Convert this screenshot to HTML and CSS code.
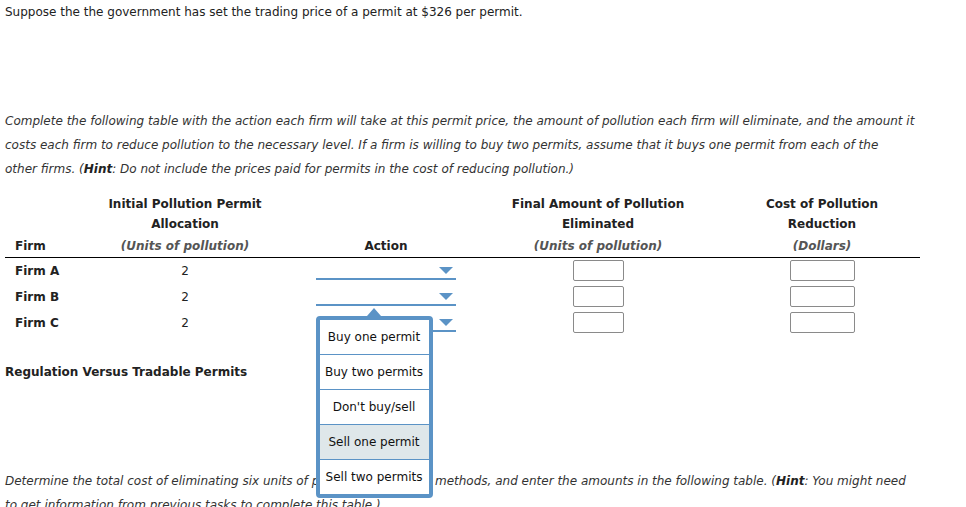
FILE: index.html
```html
<!DOCTYPE html>
<html>
<head>
<meta charset="utf-8">
<link rel="stylesheet" href="styles.css">
</head>
<body>
<div class="page">
  <p class="intro">Suppose the the government has set the trading price of a permit at $326 per permit.</p>

  <p class="instr">Complete the following table with the action each firm will take at this permit price, the amount of pollution each firm will eliminate, and the amount it costs each firm to reduce pollution to the necessary level. If a firm is willing to buy two permits, assume that it buys one permit from each of the<br>other firms. (<b>Hint</b>: Do not include the prices paid for permits in the cost of reducing pollution.)</p>

  <div class="table">
    <div class="head">
      <div class="hc c1"><div class="ln"></div><div class="ln"></div><div class="ln last">Firm</div></div>
      <div class="hc c2"><div class="ln">Initial Pollution Permit</div><div class="ln">Allocation</div><div class="ln last unit">(Units of pollution)</div></div>
      <div class="hc c3"><div class="ln"></div><div class="ln"></div><div class="ln last">Action</div></div>
      <div class="hc c4"><div class="ln">Final Amount of Pollution</div><div class="ln">Eliminated</div><div class="ln last unit">(Units of pollution)</div></div>
      <div class="hc c5"><div class="ln">Cost of Pollution</div><div class="ln">Reduction</div><div class="ln last unit">(Dollars)</div></div>
    </div>

    <div class="row">
      <div class="cell c1 firm">Firm A</div>
      <div class="cell c2">2</div>
      <div class="cell c3"><div class="select"><span class="tri"></span></div></div>
      <div class="cell c4"><div class="inp small"></div></div>
      <div class="cell c5"><div class="inp wide"></div></div>
    </div>
    <div class="row">
      <div class="cell c1 firm">Firm B</div>
      <div class="cell c2">2</div>
      <div class="cell c3"><div class="select"><span class="tri"></span></div></div>
      <div class="cell c4"><div class="inp small"></div></div>
      <div class="cell c5"><div class="inp wide"></div></div>
    </div>
    <div class="row">
      <div class="cell c1 firm">Firm C</div>
      <div class="cell c2">2</div>
      <div class="cell c3">
        <div class="select open"><span class="tri"></span>
          <div class="menu">
            <span class="caret"></span>
            <div class="opt">Buy one permit</div>
            <div class="opt">Buy two permits</div>
            <div class="opt">Don't buy/sell</div>
            <div class="opt hl">Sell one permit</div>
            <div class="opt">Sell two permits</div>
          </div>
        </div>
      </div>
      <div class="cell c4"><div class="inp small"></div></div>
      <div class="cell c5"><div class="inp wide"></div></div>
    </div>
  </div>

  <h3 class="sub">Regulation Versus Tradable Permits</h3>

  <p class="instr det">Determine the total cost of eliminating six units of pollution using both methods, and enter the amounts in the following table. (<b>Hint</b>: You might need<br>to get information from previous tasks to complete this table.)</p>
</div>
</body>
</html>
```

FILE: styles.css
```css
html, body {
  margin: 0;
  padding: 0;
  background: #fff;
}
body {
  font-family: "DejaVu Sans", Verdana, sans-serif;
  font-size: 12px;
  color: #222;
  overflow: hidden;
}
.page {
  padding: 0 5px;
  width: 920px;
}
.intro {
  margin: 0;
  line-height: 24px;
}
.instr {
  margin: 85px 0 0 0;
  line-height: 24px;
  font-style: italic;
  color: #333;
}
.instr b {
  color: #222;
}
.table {
  margin-top: 13px;
  width: 915px;
}
.head {
  display: grid;
  grid-template-columns: 95px 170px 232px 192px 226px;
  border-bottom: 1px solid #000;
  padding-bottom: 1px;
}
.hc {
  font-weight: bold;
  text-align: center;
  color: #222;
}
.hc .ln {
  height: 20px;
  line-height: 20px;
}
.hc .ln.last {
  margin-top: 2px;
}
.hc .unit {
  font-style: italic;
  color: #555;
}
.hc.c1 {
  text-align: left;
  padding-left: 10px;
}
.hc.c5, .cell.c5 {
  padding-left: 30px;
}
.row {
  display: grid;
  grid-template-columns: 95px 170px 232px 192px 226px;
  height: 26px;
}
.cell {
  display: flex;
  align-items: center;
  justify-content: center;
}
.cell.c1 {
  justify-content: flex-start;
  padding-left: 10px;
}
.firm {
  font-weight: bold;
}
.select {
  position: relative;
  width: 140px;
  height: 22px;
  border-bottom: 2px solid #5b93c6;
  display: flex;
  justify-content: flex-end;
  align-items: flex-end;
  padding-bottom: 4px;
  box-sizing: border-box;
  align-self: flex-start;
  margin-left: -1px;
}
.tri {
  width: 0;
  height: 0;
  border-left: 7px solid transparent;
  border-right: 7px solid transparent;
  border-top: 7px solid #5b93c6;
  margin-right: 3px;
}
.inp {
  height: 21px;
  border: 1px solid #8a8a8a;
  border-radius: 2px;
  box-sizing: border-box;
  align-self: flex-start;
  margin-top: 2px;
}
.inp.small { width: 51px; }
.inp.wide { width: 65px; }
.menu {
  position: absolute;
  left: 0;
  top: 6px;
  width: 117px;
  box-sizing: border-box;
  border: 4px solid #5b93c6;
  border-radius: 4px;
  background: #fff;
  z-index: 5;
}
.caret {
  position: absolute;
  left: 47px;
  top: -12px;
  width: 0;
  height: 0;
  border-left: 7px solid transparent;
  border-right: 7px solid transparent;
  border-bottom: 8px solid #5b93c6;
}
.opt {
  height: 34px;
  line-height: 34px;
  text-align: center;
  color: #111;
  border-top: 1px solid #5b93c6;
  white-space: nowrap;
}
.opt:first-of-type {
  border-top: 0;
}
.opt.hl {
  background: #dfe7ea;
}
.sub {
  margin: 24px 0 0 0;
  font-size: 12px;
  line-height: 24px;
  font-weight: bold;
  color: #222;
}
.instr.det {
  margin-top: 85px;
}
```
